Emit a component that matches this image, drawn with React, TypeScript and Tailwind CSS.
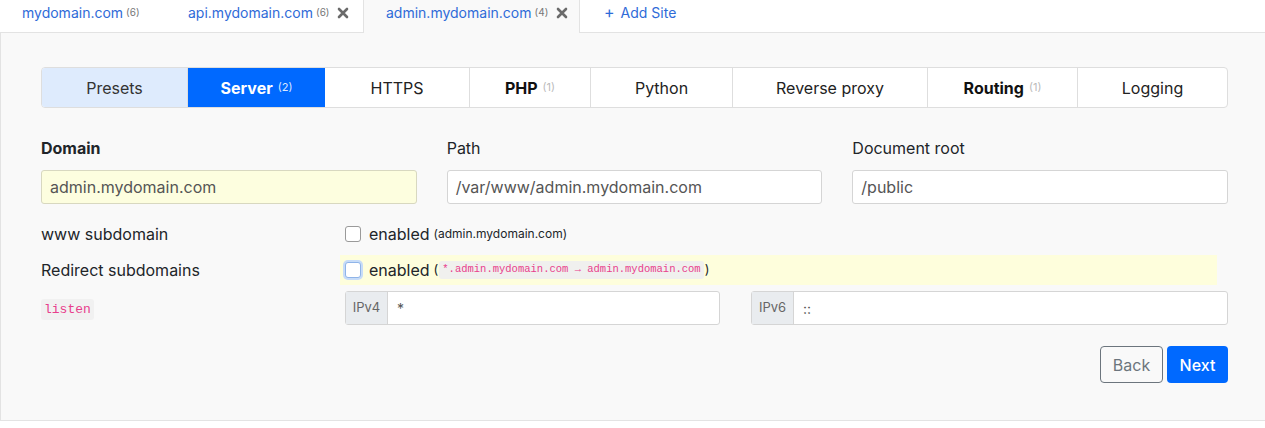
import React from "react";

const font = "font-['Inter','Liberation_Sans',sans-serif]";
const mono = "font-['Liberation_Mono','DejaVu_Sans_Mono',monospace]";

function CloseX() {
  return (
    <svg width="12" height="12" viewBox="0 0 12 12" className="ml-[8px] mt-[2px]">
      <path d="M2 2 L10 10 M10 2 L2 10" stroke="#6b6b6b" strokeWidth="2.6" strokeLinecap="round" />
    </svg>
  );
}

function SiteTab({ name, count, closable, active, width }: { name: string; count: number; closable?: boolean; active?: boolean; width: string }) {
  return (
    <div
      className={`${width} flex h-[32px] items-start pt-[2px] pl-[22px] ${
        active ? "relative z-10 -mb-px h-[33px] border-x border-[#e3e3e3] bg-[#f9f9f9]" : ""
      }`}
    >
      <div className="flex h-[20px] items-center">
        <span className="text-[14px] text-[#2f6bd8]">{name}</span>
        <span className="ml-[3px] text-[10px] text-[#777]">({count})</span>
        {closable && <CloseX />}
      </div>
    </div>
  );
}

const steps = [
  { label: "Presets", w: "w-[145px]", kind: "preset" },
  { label: "Server", w: "w-[138px]", kind: "active", count: 2 },
  { label: "HTTPS", w: "w-[144px]" },
  { label: "PHP", w: "w-[121px]", bold: true, count: 1 },
  { label: "Python", w: "w-[142px]" },
  { label: "Reverse proxy", w: "w-[195px]" },
  { label: "Routing", w: "w-[150px]", bold: true, count: 1 },
  { label: "Logging", w: "flex-1" },
];

function Checkbox({ focused }: { focused?: boolean }) {
  return (
    <span
      className={`inline-block h-[16px] w-[16px] shrink-0 rounded-[3px] border bg-white ${
        focused ? "border-[#8fb4e8] shadow-[0_0_0_2px_#c7dcf8]" : "border-[#9a9a9a]"
      }`}
    />
  );
}

function InputGroup({ prefix, value, width }: { prefix: string; value: string; width: string }) {
  return (
    <div className={`${width} flex h-[34px] rounded-[3px] border border-[#d5d5d5] bg-white`}>
      <div className="flex w-[42px] items-center justify-center border-r border-[#d5d5d5] bg-[#e9ecef] text-[13px] text-[#666]">{prefix}</div>
      <div className="flex items-center pl-[9px] text-[14px] text-[#555]">{value}</div>
    </div>
  );
}

export default function App() {
  return (
    <div className={`w-[1265px] bg-white ${font} text-[#212529]`}>
      <div className="flex items-start border-b border-[#e3e3e3]">
        <SiteTab name="mydomain.com" count={6} width="w-[166px]" />
        <SiteTab name="api.mydomain.com" count={6} closable width="w-[197px]" />
        <SiteTab name="admin.mydomain.com" count={4} closable active width="w-[217px]" />
        <div className="flex h-[32px] items-start pt-[2px] pl-[24px] text-[14px] text-[#2f6bd8]">
          <div className="flex h-[20px] items-center">
            <span className="mr-[6px] text-[16px]">+</span>Add Site
          </div>
        </div>
      </div>

      <div className="border-b border-l border-[#e3e3e3] bg-[#f9f9f9] pl-10 pr-[37px] pt-[34px] pb-[37px]">
        <div className="flex h-[41px] overflow-hidden rounded-[4px] border border-[#dedede] bg-white">
          {steps.map((s, i) => (
            <div
              key={s.label}
              className={`${s.w} flex items-center justify-center text-[16px] ${i > 0 && i !== 2 ? "border-l border-[#dedede]" : ""} ${
                s.kind === "preset"
                  ? "bg-[#deebfd] text-[#333]"
                  : s.kind === "active"
                  ? "bg-[#0069ff] font-bold text-white"
                  : s.bold
                  ? "font-bold text-[#111]"
                  : "text-[#222]"
              }`}
            >
              {s.label}
              {s.count && (
                <span className={`ml-[5px] text-[11px] font-normal ${s.kind === "active" ? "text-[#dce8ff]" : "text-[#bbb]"}`}>({s.count})</span>
              )}
            </div>
          ))}
        </div>

        <div className="mt-[28px] grid grid-cols-3 gap-x-[30px]">
          <div>
            <div className="mb-[10px] h-[24px] text-[16px] font-bold leading-[24px]">Domain</div>
            <div className="flex h-[34px] items-center rounded-[3px] border border-[#d8d8c0] bg-[#fdfedf] px-[8px] text-[16px] text-[#555]">admin.mydomain.com</div>
          </div>
          <div>
            <div className="mb-[10px] h-[24px] text-[16px] leading-[24px]">Path</div>
            <div className="flex h-[34px] items-center rounded-[3px] border border-[#d5d5d5] bg-white px-[8px] text-[16px] text-[#555]">/var/www/admin.mydomain.com</div>
          </div>
          <div>
            <div className="mb-[10px] h-[24px] text-[16px] leading-[24px]">Document root</div>
            <div className="flex h-[34px] items-center rounded-[3px] border border-[#d5d5d5] bg-white px-[8px] text-[16px] text-[#555]">/public</div>
          </div>
        </div>

        <div className="mt-[15px] flex flex-col gap-[6px]">
          <div className="flex h-[30px] items-center">
            <div className="w-[304px] text-[16px]">www subdomain</div>
            <Checkbox />
            <span className="ml-[8px] text-[16px]">enabled</span>
            <span className="ml-[4px] text-[12px]">(admin.mydomain.com)</span>
          </div>
          <div className="flex h-[30px] items-center">
            <div className="w-[299px] text-[16px]">Redirect subdomains</div>
            <div className="flex h-[30px] w-[877px] items-center bg-[#fefedc] pl-[5px]">
              <Checkbox focused />
              <span className="ml-[8px] text-[16px]">enabled</span>
              <span className="ml-[4px] text-[13px]">(</span>
              <code className={`${mono} mx-[1px] rounded-[3px] bg-[#f0f0ee] px-[3px] py-[1px] text-[10.5px] text-[#e83e8c]`}>
                *.admin.mydomain.com → admin.mydomain.com
              </code>
              <span className="text-[13px]">)</span>
            </div>
          </div>
          <div className="flex h-[34px] items-center">
            <div className="w-[304px] -mt-[2px]">
              <code className={`${mono} rounded-[3px] bg-[#f1f1f1] px-[3px] py-[3px] text-[13px] text-[#e83e8c]`}>listen</code>
            </div>
            <InputGroup prefix="IPv4" value="*" width="w-[375px]" />
            <div className="w-[31px]" />
            <InputGroup prefix="IPv6" value="::" width="flex-1" />
          </div>
        </div>

        <div className="mt-[21px] flex justify-end gap-[4px]">
          <button className="h-[37px] w-[63px] rounded-[4px] border border-[#6c757d] text-[16px] text-[#6c757d]">Back</button>
          <button className="h-[37px] w-[61px] rounded-[4px] bg-[#0069ff] text-[16px] font-medium text-white">Next</button>
        </div>
      </div>
    </div>
  );
}
